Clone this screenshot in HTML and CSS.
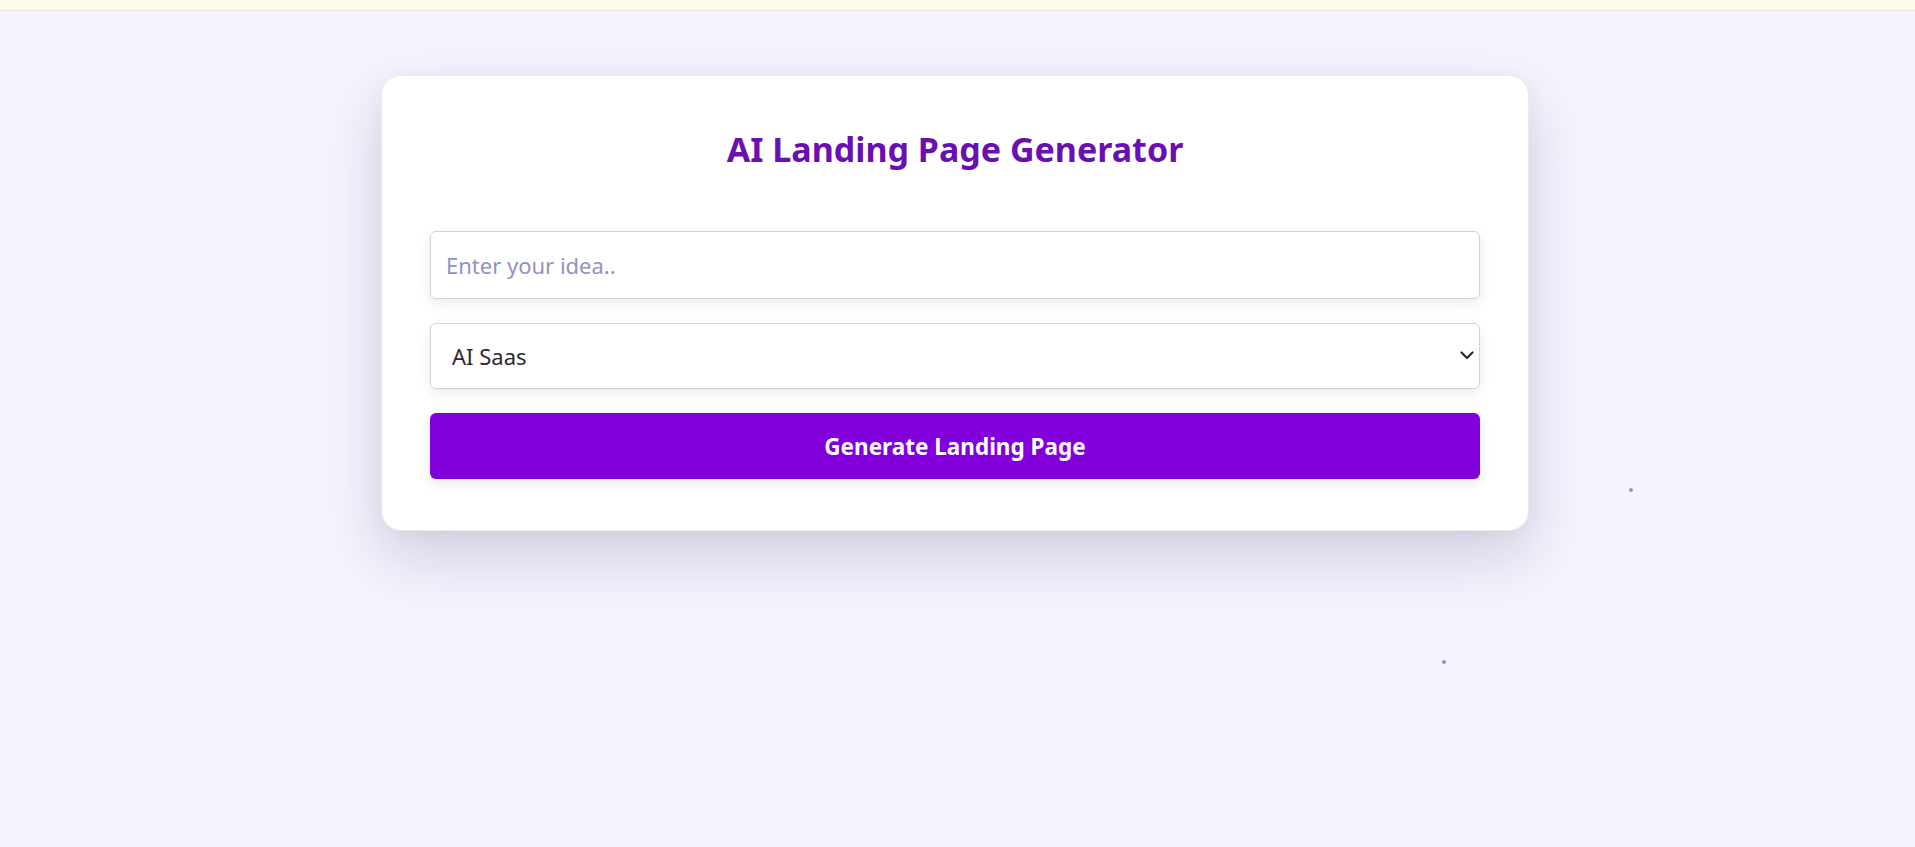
FILE: index.html
```html
<!DOCTYPE html>
<html lang="en">

<head>
  <meta charset="UTF-8">
  <meta name="viewport" content="width=device-width, initial-scale=1.0">
  <title>AI Landing Page Generator</title>
  <link rel="stylesheet" href="styles.css">
</head>

<body>
  <!-- top strip -->
  <div class="topbar"></div>

  <div class="container">
    <h1>AI Landing Page Generator</h1>

    <form class="gen-form" onsubmit="return false;">
      <input type="text" class="idea" placeholder="Enter your idea..">

      <div class="select-wrap">
        <select class="category">
          <option>AI Saas</option>
          <option>E-commerce</option>
          <option>Portfolio</option>
          <option>Startup</option>
        </select>
        <svg class="chevron" width="14" height="9" viewBox="0 0 14 9">
          <path d="M1.5 1.5 L7 7 L12.5 1.5" fill="none" stroke="#2a2838" stroke-width="2.2" stroke-linecap="round" stroke-linejoin="round"/>
        </svg>
      </div>

      <button type="submit" class="btn">Generate Landing Page</button>
    </form>
  </div>

  <!-- floating particles -->
  <span class="dot" style="left: 1629px; top: 488px;"></span>
  <span class="dot" style="left: 1442px; top: 660px;"></span>
</body>

</html>
```

FILE: styles.css
```css
/* CSS styles */
body {
  font-family: "Noto Sans", "Open Sans", sans-serif;
  margin: 0;
  padding: 0 5px 0 0;
  background-color: #f5f3fe;
  min-height: 100vh;
}

.topbar {
  height: 10px;
  margin-right: -5px;
  background-color: #fdfbea;
  border-bottom: 1px solid #e7e5d7;
}

.container {
  max-width: 1148px;
  box-sizing: border-box;
  margin: 64px auto 0;
  padding: 50px 48px 51px;
  background-color: #fff;
  border: 1px solid #ebeaf0;
  border-radius: 20px;
  box-shadow: 0 26px 60px rgba(40, 30, 80, 0.17), 0 4px 20px rgba(40, 30, 80, 0.04);
}

h1 {
  text-align: center;
  color: #6a10b2;
  font-size: 34px;
  font-weight: 700;
  margin: 0 0 59px;
}

.gen-form {
  display: flex;
  flex-direction: column;
  gap: 24px;
}

.idea,
.category {
  width: 100%;
  height: 66px;
  box-sizing: border-box;
  border: 1px solid #d5d2df;
  border-radius: 6px;
  background-color: #fff;
  font-family: inherit;
  font-size: 22px;
  box-shadow: 0 4px 12px rgba(30, 20, 60, 0.09);
  outline: none;
}

.idea {
  height: 68px;
  padding: 0 15px;
  color: #2a2838;
}

.idea::placeholder {
  color: #9093c2;
}

.select-wrap {
  position: relative;
}

.category {
  appearance: none;
  -webkit-appearance: none;
  padding: 0 21px;
  color: #2a2838;
}

.chevron {
  position: absolute;
  right: 6px;
  top: 28px;
  pointer-events: none;
}

.btn {
  height: 66px;
  border: none;
  border-radius: 6px;
  background-color: #8200db;
  color: #fff;
  font-family: inherit;
  font-size: 22.5px;
  font-weight: 700;
  cursor: pointer;
  box-shadow: 0 4px 12px rgba(30, 20, 60, 0.1);
}

.dot {
  position: absolute;
  width: 4px;
  height: 4px;
  border-radius: 50%;
  background-color: #9592cc;
}
```
